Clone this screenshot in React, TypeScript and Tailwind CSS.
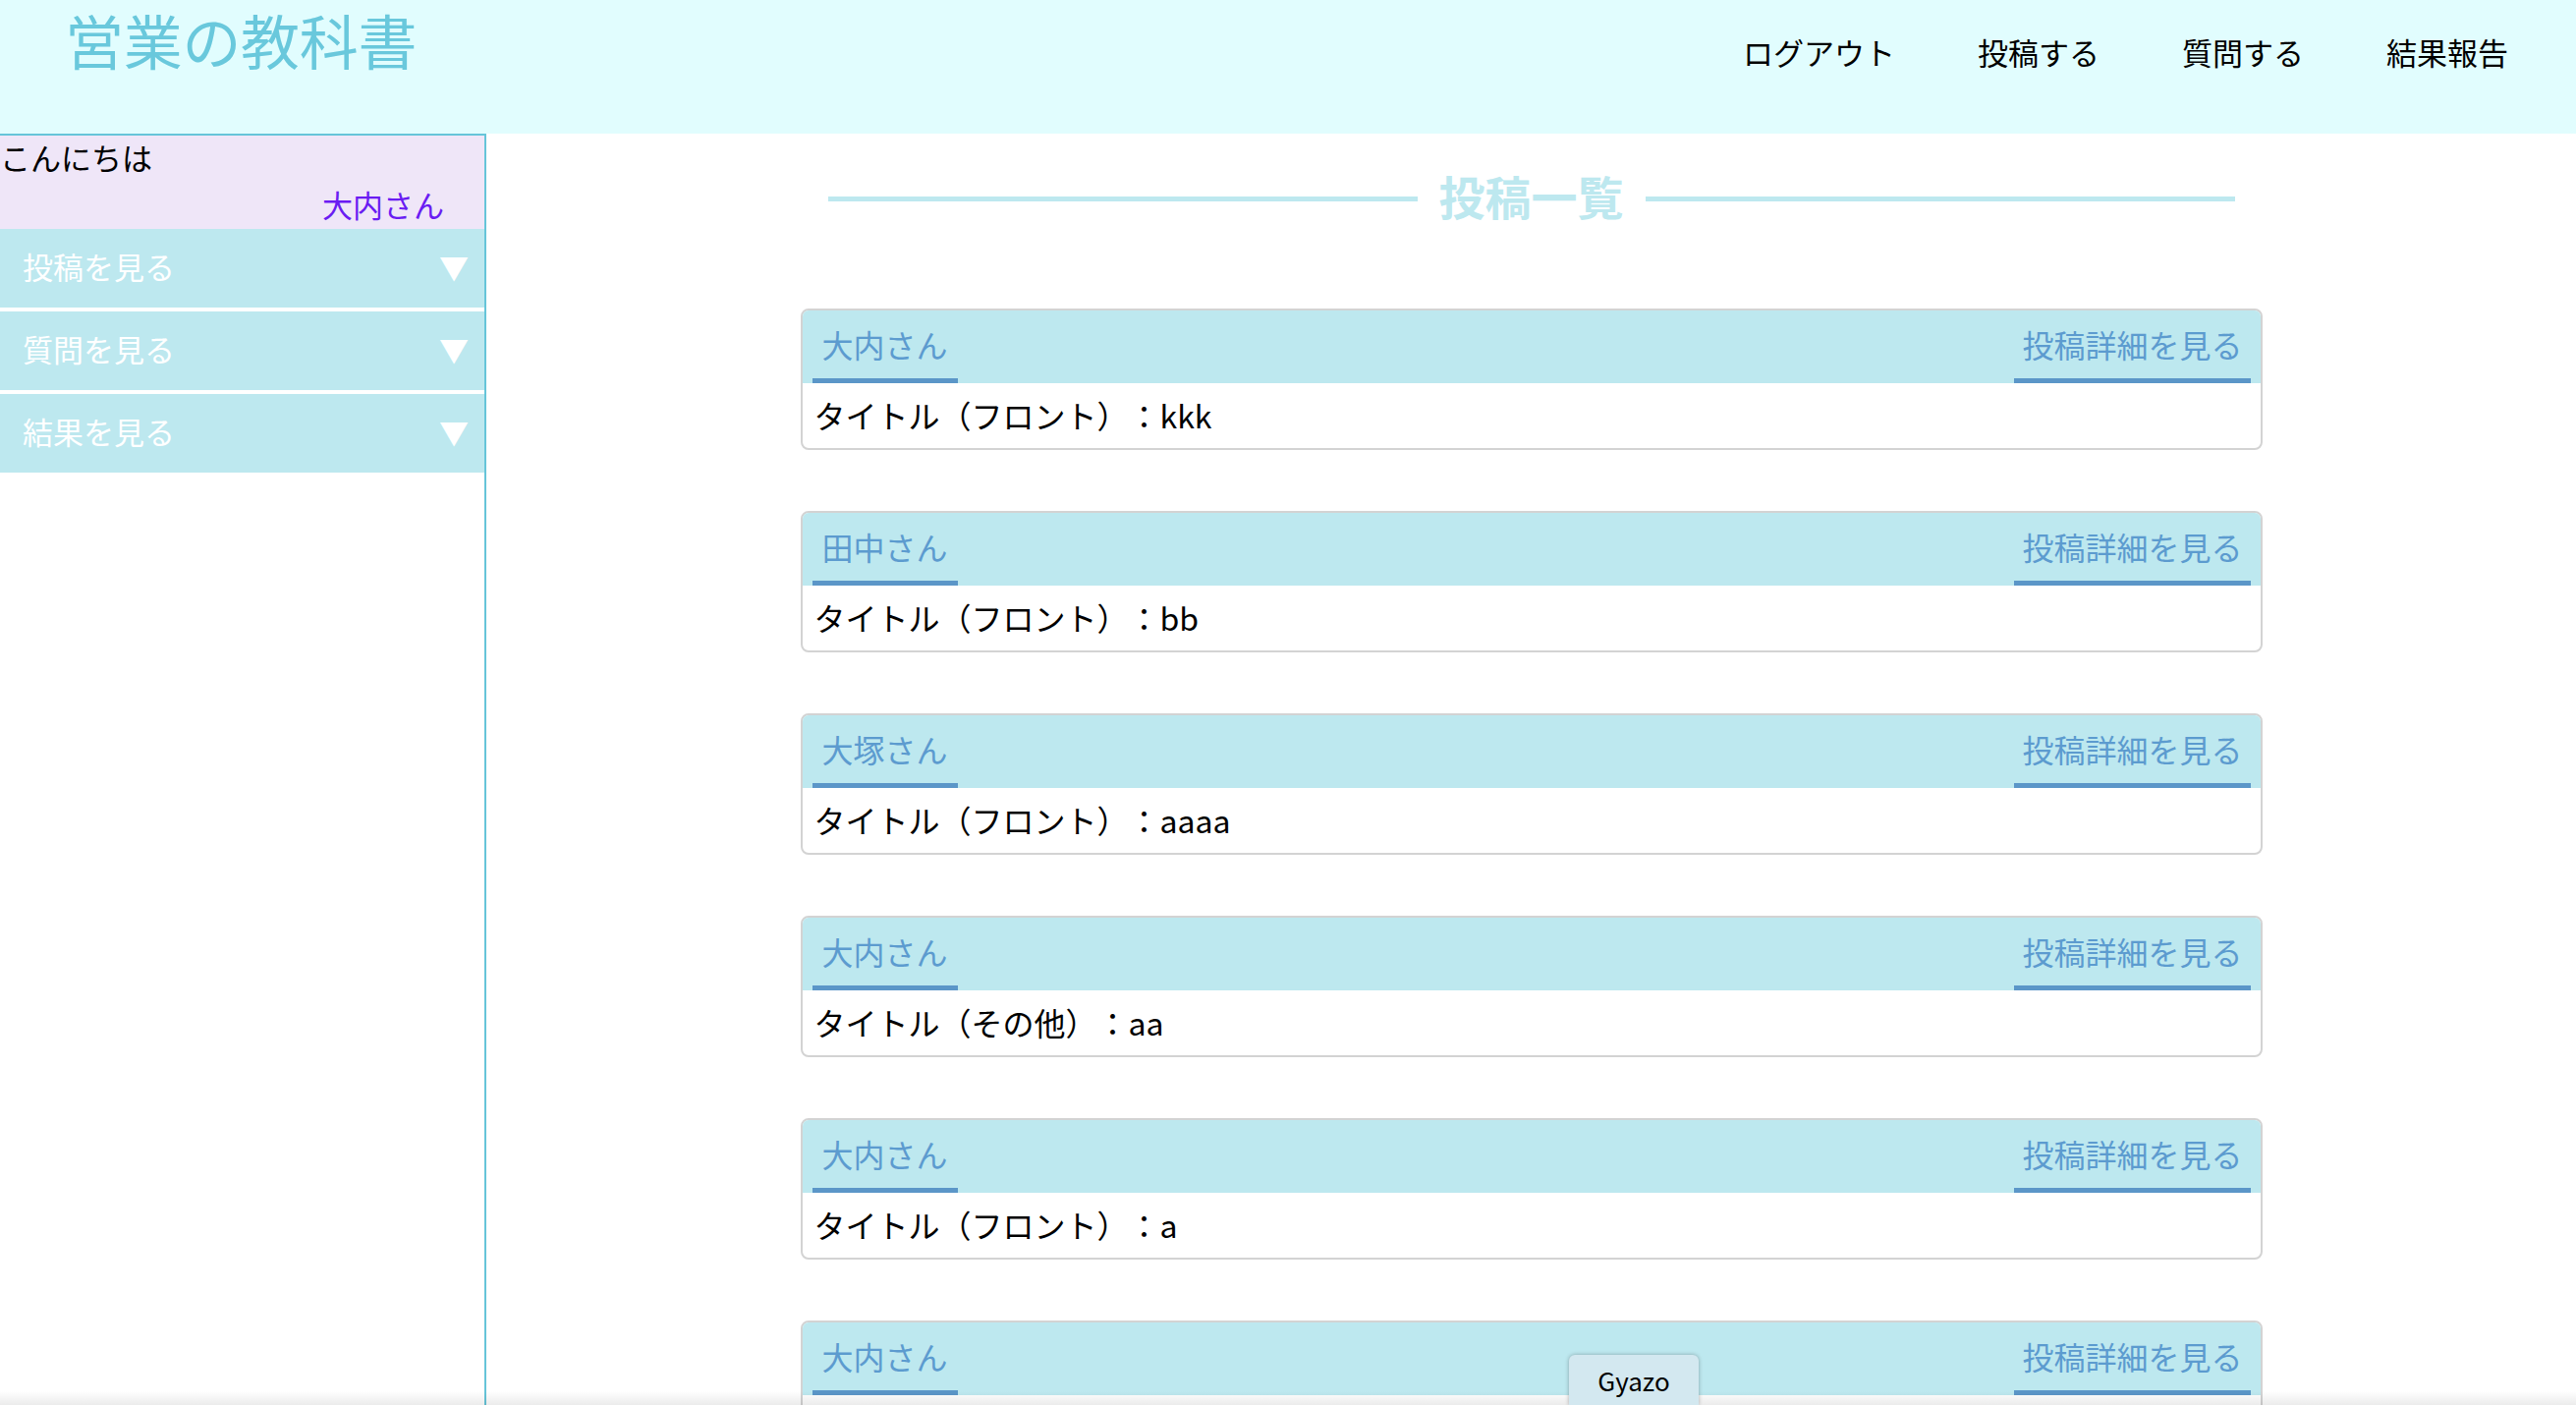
import React from "react";

const posts = [
  { name: "大内さん", title: "タイトル（フロント）：kkk" },
  { name: "田中さん", title: "タイトル（フロント）：bb" },
  { name: "大塚さん", title: "タイトル（フロント）：aaaa" },
  { name: "大内さん", title: "タイトル（その他）：aa" },
  { name: "大内さん", title: "タイトル（フロント）：a" },
  { name: "大内さん", title: "タイトル（フロント）：a" },
];

const font = {
  fontFamily: '"Noto Sans CJK JP", "Noto Sans", sans-serif',
};

function MenuItem({ label }: { label: string }) {
  return (
    <div className="flex h-[80px] items-center justify-between bg-[#bde8ef] pb-[5px] pl-[23px] pr-[16px]">
      <span className="text-[31px] leading-none text-white">{label}</span>
      <span className="text-[30px] leading-none text-white">▼</span>
    </div>
  );
}

export default function App() {
  return (
    <div className="relative h-[1430px] w-full overflow-hidden bg-white [text-spacing-trim:space-all]" style={font}>
      <header className="flex h-[136px] items-start justify-between bg-[#e1fdfe]">
        <div className="pl-[66px] pt-[2px] text-[60px] leading-[76px] tracking-[-0.3px] text-[#69c8dc]">
          営業の教科書
        </div>
        <nav className="flex items-center gap-[84px] pr-[69px] pt-[31px] text-[31px] leading-[44px] text-black">
          <span>ログアウト</span>
          <span>投稿する</span>
          <span>質問する</span>
          <span>結果報告</span>
        </nav>
      </header>
      <div className="flex h-[1294px]">
        <aside className="w-[495px] shrink-0 border-r-2 border-t-2 border-[#66c5d9] bg-white">
          <div className="bg-[#efe6f8] pb-[1px]">
            <div className="h-[46px] text-[31px] leading-[44px] text-black">こんにちは</div>
            <div className="h-[48px] pr-[41px] text-right text-[31px] leading-[48px] text-[#6a1cf2]">
              大内さん
            </div>
          </div>
          <div className="flex flex-col gap-[4px]">
            <MenuItem label="投稿を見る" />
            <MenuItem label="質問を見る" />
            <MenuItem label="結果を見る" />
          </div>
        </aside>
        <main className="flex flex-1 flex-col items-center">
          <div className="mt-[33px] flex w-[1432px] items-center gap-[22px]">
            <div className="mt-[6px] h-[5px] flex-1 bg-[#bde8ef]" />
            <div className="text-[47px] font-bold leading-[60px] text-[#bde8ef]">投稿一覧</div>
            <div className="mt-[6px] h-[5px] flex-1 bg-[#bde8ef]" />
          </div>
          <div className="mt-[85px] flex w-[1488px] flex-col gap-[62px]">
            {posts.map((p, i) => (
              <div
                key={i}
                className="overflow-hidden rounded-[8px] border-2 border-[#d3d3d3] bg-white"
              >
                <div className="flex h-[74px] items-end justify-between bg-[#bde8ef] px-[10px]">
                  <span className="border-b-[5px] border-[#5b96c8] px-[10px] pb-[18px] text-[32px] leading-[34px] text-[#5c9bcf]">
                    {p.name}
                  </span>
                  <span className="border-b-[5px] border-[#5b96c8] px-[8px] pb-[18px] text-[32px] leading-[34px] text-[#5c9bcf]">
                    投稿詳細を見る
                  </span>
                </div>
                <div className="flex h-[66px] items-center px-[12px] pb-[2px] text-[32px] leading-none text-black">
                  {p.title}
                </div>
              </div>
            ))}
          </div>
        </main>
      </div>
      <div className="pointer-events-none absolute bottom-0 left-0 h-[14px] w-full bg-gradient-to-b from-transparent to-[#00000014]" />
      <div className="absolute bottom-0 left-[1597px] flex h-[51px] w-[132px] items-center justify-center rounded-t-[6px] bg-[#d3e8f0] text-[26px] text-black shadow-[0_0_4px_rgba(0,0,0,0.3)]">
        Gyazo
      </div>
    </div>
  );
}
